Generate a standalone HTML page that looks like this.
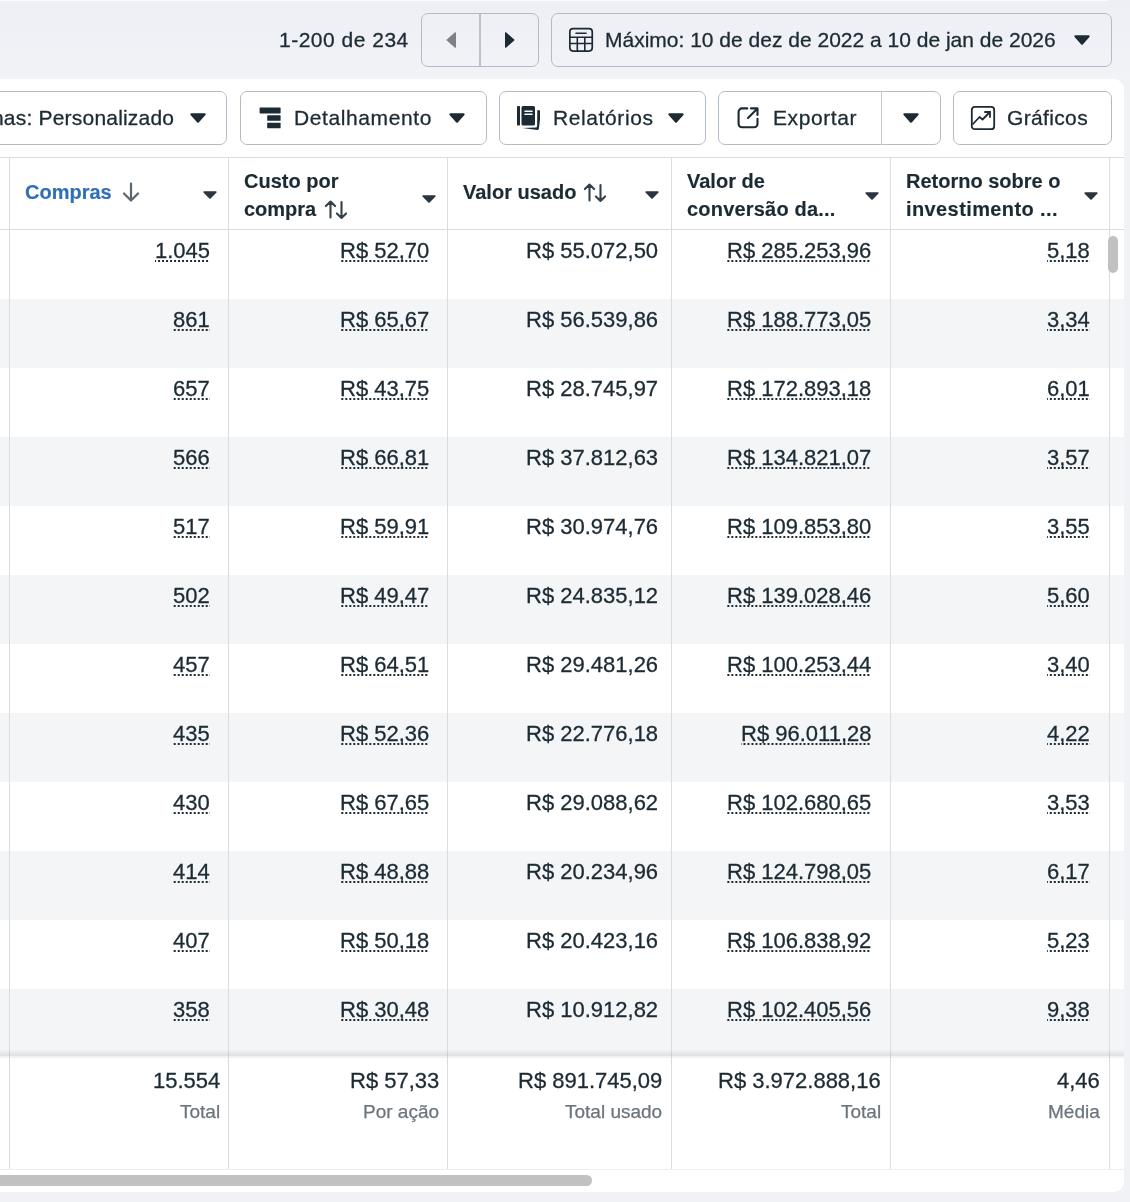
<!DOCTYPE html>
<html><head><meta charset="utf-8"><style>
*{margin:0;padding:0;box-sizing:border-box}
html,body{width:1130px;height:1202px;overflow:hidden;background:#f1f2f6;font-family:"Liberation Sans",sans-serif;color:#1c2b33}
.a{position:absolute;white-space:nowrap;will-change:transform}
.ic{position:absolute;display:block}
.btn{position:absolute;border:1px solid #b3bcc6;border-radius:7px;background:#fff}
.tb{font-size:21px;line-height:24px;letter-spacing:0.6px;-webkit-text-stroke-width:0.3px}
.vl{position:absolute;width:1px;background:#dbdcdf}
.hl{position:absolute;height:1px;background:#dbdcdf}
.d{font-size:22px;line-height:24px;text-align:right;-webkit-text-stroke-width:0.3px}
.u{background-image:linear-gradient(to right,#1c2b33 50%,transparent 50%);background-size:4px 2px;background-repeat:repeat-x;background-position:right 0 bottom 1px}
.hd{font-size:20px;font-weight:bold;line-height:28px;margin-top:1px;-webkit-text-stroke-width:0.15px}
.sg{font-size:19px;color:#6b747c;line-height:22px;text-align:right;-webkit-text-stroke-width:0.25px}
</style></head><body>
<div class="a" style="left:0;top:0;width:1130px;height:80px;background:linear-gradient(#eeeff5,#f2f3f7)"></div>
<div class="a" style="left:0;top:0;width:1109px;height:1px;background:#fbfbfd;border-radius:0 0 2px 0"></div>
<div class="a tb" style="left:279px;top:28px;letter-spacing:0.5px">1-200 de 234</div>
<div class="btn" style="left:421px;top:13px;width:118px;height:54px;background:transparent"></div>
<div class="a" style="left:479px;top:13px;width:2px;height:54px;background:#b9c1ca"></div>
<svg class="ic" style="left:446px;top:32px" width="11" height="16" viewBox="0 0 11 16"><path d="M10 1 V15 a0.8 0.8 0 0 1 -1.3 0.6 L0.8 8.6 a0.8 0.8 0 0 1 0 -1.2 L8.7 0.4 A0.8 0.8 0 0 1 10 1Z" fill="#7b8187"/></svg>
<svg class="ic" style="left:504px;top:32px" width="11" height="16" viewBox="0 0 11 16"><path d="M1 1 V15 a0.8 0.8 0 0 0 1.3 0.6 L10.2 8.6 a0.8 0.8 0 0 0 0 -1.2 L2.3 0.4 A0.8 0.8 0 0 0 1 1Z" fill="#1c2b33"/></svg>
<div class="btn" style="left:551px;top:13px;width:561px;height:54px;background:transparent"></div>
<svg class="ic" style="left:568px;top:27px" width="26" height="26" viewBox="0 0 26 26"><rect x="1.85" y="1.65" width="22.4" height="22.4" rx="3.2" fill="none" stroke="#1c2b33" stroke-width="1.7"/><path d="M8 6.3H18" stroke="#1c2b33" stroke-width="1.5" stroke-linecap="round"/><path d="M1.85 10.3H24.25M1.85 16.5H24.25M9.3 10.3V24M16.8 10.3V24" stroke="#1c2b33" stroke-width="1.6"/></svg>
<div class="a tb" style="left:605px;top:28px;letter-spacing:0">Máximo: 10 de dez de 2022 a 10 de jan de 2026</div>
<svg class="ic" style="left:1074px;top:35px" width="16" height="10" viewBox="0 0 16 10" preserveAspectRatio="none"><path d="M1.3 0.3 H14.7 a1 1 0 0 1 0.75 1.65 L8.75 9.4 a1 1 0 0 1 -1.5 0 L0.55 1.95 a1 1 0 0 1 0.75 -1.65Z" fill="#1c2b33"/></svg>
<div class="a" style="left:-20px;top:79px;width:1144px;height:1113px;background:#fff;border-radius:10px"></div>
<div class="btn" style="left:-20px;top:91px;width:247px;height:54px"></div>
<div class="a tb" style="right:956px;top:106px;letter-spacing:0.2px">Colunas: Personalizado</div>
<svg class="ic" style="left:190px;top:113px" width="16" height="10" viewBox="0 0 16 10" preserveAspectRatio="none"><path d="M1.3 0.3 H14.7 a1 1 0 0 1 0.75 1.65 L8.75 9.4 a1 1 0 0 1 -1.5 0 L0.55 1.95 a1 1 0 0 1 0.75 -1.65Z" fill="#1c2b33"/></svg>
<div class="btn" style="left:240px;top:91px;width:247px;height:54px"></div>
<svg class="ic" style="left:259px;top:107px" width="22" height="22" viewBox="0 0 22 22"><rect x="0.6" y="0.6" width="21" height="5.8" rx="0.6" fill="#1c2b33"/><rect x="8.2" y="8.2" width="13.4" height="5.6" rx="0.6" fill="#1c2b33"/><rect x="8.2" y="15.7" width="13.4" height="5.6" rx="0.6" fill="#1c2b33"/></svg>
<div class="a tb" style="left:294px;top:106px">Detalhamento</div>
<svg class="ic" style="left:449px;top:113px" width="16" height="10" viewBox="0 0 16 10" preserveAspectRatio="none"><path d="M1.3 0.3 H14.7 a1 1 0 0 1 0.75 1.65 L8.75 9.4 a1 1 0 0 1 -1.5 0 L0.55 1.95 a1 1 0 0 1 0.75 -1.65Z" fill="#1c2b33"/></svg>
<div class="btn" style="left:499px;top:91px;width:207px;height:54px"></div>
<svg class="ic" style="left:516px;top:105px" width="24" height="26" viewBox="0 0 24 26"><rect x="1" y="1" width="3" height="19.5" rx="0.8" fill="#1c2b33"/><rect x="5.5" y="1" width="13.5" height="19.5" rx="1.5" fill="#1c2b33"/><path d="M9 6.2H16M9 9.2H16" stroke="#fff" stroke-width="1.5" stroke-linecap="round"/><path d="M21.3 5.0 L24.1 5.5 Q25 5.7 24.9 6.6 L22.9 23.8 Q22.7 25.1 21.4 24.9 L6.5 22.9 L19.6 22.6 Q21.1 22.5 21.1 20.9 Z" fill="#1c2b33"/></svg>
<div class="a tb" style="left:553px;top:106px">Relatórios</div>
<svg class="ic" style="left:668px;top:113px" width="16" height="10" viewBox="0 0 16 10" preserveAspectRatio="none"><path d="M1.3 0.3 H14.7 a1 1 0 0 1 0.75 1.65 L8.75 9.4 a1 1 0 0 1 -1.5 0 L0.55 1.95 a1 1 0 0 1 0.75 -1.65Z" fill="#1c2b33"/></svg>
<div class="btn" style="left:718px;top:91px;width:223px;height:54px"></div>
<div class="a" style="left:881px;top:91px;width:1px;height:54px;background:#c5ccd4"></div>
<svg class="ic" style="left:736px;top:106px" width="24" height="24" viewBox="0 0 24 24"><path d="M11.3 2.4 H6 a3.4 3.4 0 0 0 -3.4 3.4 V17.9 a3.4 3.4 0 0 0 3.4 3.4 H18.1 a3.4 3.4 0 0 0 3.4 -3.4 V12.8" fill="none" stroke="#1c2b33" stroke-width="2.1" stroke-linecap="round"/><path d="M15 2.4 H21.5 V8.9 M21.2 2.7 L12 11.9" fill="none" stroke="#1c2b33" stroke-width="2.1" stroke-linecap="round" stroke-linejoin="round"/></svg>
<div class="a tb" style="left:773px;top:106px">Exportar</div>
<svg class="ic" style="left:903px;top:113px" width="16" height="10" viewBox="0 0 16 10" preserveAspectRatio="none"><path d="M1.3 0.3 H14.7 a1 1 0 0 1 0.75 1.65 L8.75 9.4 a1 1 0 0 1 -1.5 0 L0.55 1.95 a1 1 0 0 1 0.75 -1.65Z" fill="#1c2b33"/></svg>
<div class="btn" style="left:953px;top:91px;width:159px;height:54px"></div>
<svg class="ic" style="left:970px;top:105px" width="26" height="26" viewBox="0 0 26 26"><rect x="1.8" y="1.8" width="22.4" height="22.4" rx="3" fill="none" stroke="#1c2b33" stroke-width="1.8"/><path d="M2.5 19.5 L9.5 12 L12.5 14.5 L19.5 7.5" fill="none" stroke="#1c2b33" stroke-width="1.8" stroke-linejoin="round"/><path d="M15 7 H20 V12" fill="none" stroke="#1c2b33" stroke-width="1.8" stroke-linecap="round"/></svg>
<div class="a tb" style="left:1007px;top:106px;letter-spacing:0.35px">Gráficos</div>
<div class="hl" style="left:0;top:157px;width:1124px"></div>
<div class="hl" style="left:0;top:229px;width:1124px"></div>
<div class="a" style="left:0;top:299px;width:1124px;height:69px;background:#f4f5f7"></div>
<div class="a" style="left:0;top:437px;width:1124px;height:69px;background:#f4f5f7"></div>
<div class="a" style="left:0;top:575px;width:1124px;height:69px;background:#f4f5f7"></div>
<div class="a" style="left:0;top:713px;width:1124px;height:69px;background:#f4f5f7"></div>
<div class="a" style="left:0;top:851px;width:1124px;height:69px;background:#f4f5f7"></div>
<div class="a" style="left:0;top:989px;width:1124px;height:69px;background:#f4f5f7"></div>
<div class="hl" style="left:0;top:1169px;width:1124px;background:#eceef0"></div>
<div class="vl" style="left:9px;top:157px;height:1012px"></div>
<div class="vl" style="left:228px;top:157px;height:1012px"></div>
<div class="vl" style="left:447px;top:157px;height:1012px"></div>
<div class="vl" style="left:671px;top:157px;height:1012px"></div>
<div class="vl" style="left:890px;top:157px;height:1012px"></div>
<div class="vl" style="left:1109px;top:157px;height:1012px"></div>
<div class="a" style="left:0;top:1049px;width:1124px;height:7px;background:linear-gradient(rgba(40,40,60,0),rgba(40,40,60,0.10))"></div>
<div class="a" style="left:0;top:1056px;width:1124px;height:2px;background:rgba(40,60,40,0.02)"></div>
<div class="a hd" style="left:25px;top:177px;color:#2f6fb8">Compras</div>
<svg class="ic" style="left:122px;top:182px" width="18" height="20" viewBox="0 0 18 20"><path d="M9 1.5V18M2 11.5L9 18.5L16 11.5" fill="none" stroke="#5a6670" stroke-width="2.2" stroke-linecap="round" stroke-linejoin="round"/></svg>
<svg class="ic" style="left:203px;top:191px" width="14" height="8" viewBox="0 0 16 10" preserveAspectRatio="none"><path d="M1.3 0.3 H14.7 a1 1 0 0 1 0.75 1.65 L8.75 9.4 a1 1 0 0 1 -1.5 0 L0.55 1.95 a1 1 0 0 1 0.75 -1.65Z" fill="#2a3540"/></svg>
<div class="a hd" style="left:244px;top:166px">Custo por<br>compra</div>
<svg class="ic" style="left:324px;top:200px" width="24" height="20" viewBox="0 0 24 20"><path d="M6.5 17.5V1.5M1.9 6.1L6.5 1.5L11.1 6.1M17.5 2V18M12.9 13.4L17.5 18L22.1 13.4" fill="none" stroke="#34414b" stroke-width="2.1" stroke-linecap="round" stroke-linejoin="round"/></svg>
<svg class="ic" style="left:422px;top:195px" width="14" height="8" viewBox="0 0 16 10" preserveAspectRatio="none"><path d="M1.3 0.3 H14.7 a1 1 0 0 1 0.75 1.65 L8.75 9.4 a1 1 0 0 1 -1.5 0 L0.55 1.95 a1 1 0 0 1 0.75 -1.65Z" fill="#2a3540"/></svg>
<div class="a hd" style="left:463px;top:177px">Valor usado</div>
<svg class="ic" style="left:583px;top:183px" width="24" height="20" viewBox="0 0 24 20"><path d="M6.5 17.5V1.5M1.9 6.1L6.5 1.5L11.1 6.1M17.5 2V18M12.9 13.4L17.5 18L22.1 13.4" fill="none" stroke="#34414b" stroke-width="2.1" stroke-linecap="round" stroke-linejoin="round"/></svg>
<svg class="ic" style="left:645px;top:191px" width="14" height="8" viewBox="0 0 16 10" preserveAspectRatio="none"><path d="M1.3 0.3 H14.7 a1 1 0 0 1 0.75 1.65 L8.75 9.4 a1 1 0 0 1 -1.5 0 L0.55 1.95 a1 1 0 0 1 0.75 -1.65Z" fill="#2a3540"/></svg>
<div class="a hd" style="left:687px;top:166px">Valor de<br><span style="letter-spacing:0.2px">conversão da...</span></div>
<svg class="ic" style="left:865px;top:192px" width="14" height="8" viewBox="0 0 16 10" preserveAspectRatio="none"><path d="M1.3 0.3 H14.7 a1 1 0 0 1 0.75 1.65 L8.75 9.4 a1 1 0 0 1 -1.5 0 L0.55 1.95 a1 1 0 0 1 0.75 -1.65Z" fill="#2a3540"/></svg>
<div class="a hd" style="left:906px;top:166px">Retorno sobre o<br><span style="letter-spacing:0.4px">investimento ...</span></div>
<svg class="ic" style="left:1084px;top:192px" width="14" height="8" viewBox="0 0 16 10" preserveAspectRatio="none"><path d="M1.3 0.3 H14.7 a1 1 0 0 1 0.75 1.65 L8.75 9.4 a1 1 0 0 1 -1.5 0 L0.55 1.95 a1 1 0 0 1 0.75 -1.65Z" fill="#2a3540"/></svg>
<div class="a d u" style="right:920px;top:239px">1.045</div>
<div class="a d u" style="right:701px;top:239px">R$ 52,70</div>
<div class="a d" style="right:472px;top:239px">R$ 55.072,50</div>
<div class="a d u" style="right:259px;top:239px">R$ 285.253,96</div>
<div class="a d u" style="right:40px;top:239px">5,18</div>
<div class="a d u" style="right:920px;top:308px">861</div>
<div class="a d u" style="right:701px;top:308px">R$ 65,67</div>
<div class="a d" style="right:472px;top:308px">R$ 56.539,86</div>
<div class="a d u" style="right:259px;top:308px">R$ 188.773,05</div>
<div class="a d u" style="right:40px;top:308px">3,34</div>
<div class="a d u" style="right:920px;top:377px">657</div>
<div class="a d u" style="right:701px;top:377px">R$ 43,75</div>
<div class="a d" style="right:472px;top:377px">R$ 28.745,97</div>
<div class="a d u" style="right:259px;top:377px">R$ 172.893,18</div>
<div class="a d u" style="right:40px;top:377px">6,01</div>
<div class="a d u" style="right:920px;top:446px">566</div>
<div class="a d u" style="right:701px;top:446px">R$ 66,81</div>
<div class="a d" style="right:472px;top:446px">R$ 37.812,63</div>
<div class="a d u" style="right:259px;top:446px">R$ 134.821,07</div>
<div class="a d u" style="right:40px;top:446px">3,57</div>
<div class="a d u" style="right:920px;top:515px">517</div>
<div class="a d u" style="right:701px;top:515px">R$ 59,91</div>
<div class="a d" style="right:472px;top:515px">R$ 30.974,76</div>
<div class="a d u" style="right:259px;top:515px">R$ 109.853,80</div>
<div class="a d u" style="right:40px;top:515px">3,55</div>
<div class="a d u" style="right:920px;top:584px">502</div>
<div class="a d u" style="right:701px;top:584px">R$ 49,47</div>
<div class="a d" style="right:472px;top:584px">R$ 24.835,12</div>
<div class="a d u" style="right:259px;top:584px">R$ 139.028,46</div>
<div class="a d u" style="right:40px;top:584px">5,60</div>
<div class="a d u" style="right:920px;top:653px">457</div>
<div class="a d u" style="right:701px;top:653px">R$ 64,51</div>
<div class="a d" style="right:472px;top:653px">R$ 29.481,26</div>
<div class="a d u" style="right:259px;top:653px">R$ 100.253,44</div>
<div class="a d u" style="right:40px;top:653px">3,40</div>
<div class="a d u" style="right:920px;top:722px">435</div>
<div class="a d u" style="right:701px;top:722px">R$ 52,36</div>
<div class="a d" style="right:472px;top:722px">R$ 22.776,18</div>
<div class="a d u" style="right:259px;top:722px">R$ 96.011,28</div>
<div class="a d u" style="right:40px;top:722px">4,22</div>
<div class="a d u" style="right:920px;top:791px">430</div>
<div class="a d u" style="right:701px;top:791px">R$ 67,65</div>
<div class="a d" style="right:472px;top:791px">R$ 29.088,62</div>
<div class="a d u" style="right:259px;top:791px">R$ 102.680,65</div>
<div class="a d u" style="right:40px;top:791px">3,53</div>
<div class="a d u" style="right:920px;top:860px">414</div>
<div class="a d u" style="right:701px;top:860px">R$ 48,88</div>
<div class="a d" style="right:472px;top:860px">R$ 20.234,96</div>
<div class="a d u" style="right:259px;top:860px">R$ 124.798,05</div>
<div class="a d u" style="right:40px;top:860px">6,17</div>
<div class="a d u" style="right:920px;top:929px">407</div>
<div class="a d u" style="right:701px;top:929px">R$ 50,18</div>
<div class="a d" style="right:472px;top:929px">R$ 20.423,16</div>
<div class="a d u" style="right:259px;top:929px">R$ 106.838,92</div>
<div class="a d u" style="right:40px;top:929px">5,23</div>
<div class="a d u" style="right:920px;top:998px">358</div>
<div class="a d u" style="right:701px;top:998px">R$ 30,48</div>
<div class="a d" style="right:472px;top:998px">R$ 10.912,82</div>
<div class="a d u" style="right:259px;top:998px">R$ 102.405,56</div>
<div class="a d u" style="right:40px;top:998px">9,38</div>
<div class="a d" style="right:910px;top:1069px">15.554</div>
<div class="a sg" style="right:910px;top:1101px">Total</div>
<div class="a d" style="right:691px;top:1069px">R$ 57,33</div>
<div class="a sg" style="right:691px;top:1101px">Por ação</div>
<div class="a d" style="right:468px;top:1069px">R$ 891.745,09</div>
<div class="a sg" style="right:468px;top:1101px">Total usado</div>
<div class="a d" style="right:249px;top:1069px">R$ 3.972.888,16</div>
<div class="a sg" style="right:249px;top:1101px">Total</div>
<div class="a d" style="right:30px;top:1069px">4,46</div>
<div class="a sg" style="right:30px;top:1101px">Média</div>
<div class="a" style="left:-10px;top:1175px;width:602px;height:11px;border-radius:6px;background:#c1c1c1"></div>
<div class="a" style="left:1108px;top:236px;width:10px;height:37px;border-radius:5px;background:#c1c1c1"></div>
</body></html>
